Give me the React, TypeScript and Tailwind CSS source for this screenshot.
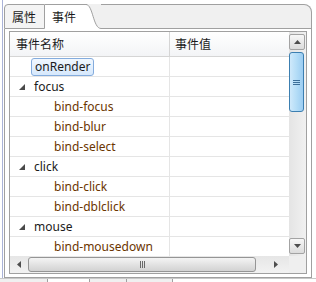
const rows: { kind: "sel" | "group" | "child"; label: string }[] = [
  { kind: "sel", label: "onRender" },
  { kind: "group", label: "focus" },
  { kind: "child", label: "bind-focus" },
  { kind: "child", label: "bind-blur" },
  { kind: "child", label: "bind-select" },
  { kind: "group", label: "click" },
  { kind: "child", label: "bind-click" },
  { kind: "child", label: "bind-dblclick" },
  { kind: "group", label: "mouse" },
  { kind: "child", label: "bind-mousedown" },
];

function Expander() {
  return (
    <svg width="6" height="6" viewBox="0 0 6 6" className="shrink-0">
      <polygon points="6,0 6,6 0,6" fill="#4a4a4a" />
    </svg>
  );
}

function Arrow({ dir }: { dir: "up" | "down" | "left" | "right" }) {
  const pts = {
    up: "0,4 7,4 3.5,0",
    down: "0,0 7,0 3.5,4",
    left: "4,0 4,7 0,3.5",
    right: "0,0 0,7 4,3.5",
  }[dir];
  const vertical = dir === "up" || dir === "down";
  return (
    <svg width={vertical ? 7 : 4} height={vertical ? 4 : 7} viewBox={vertical ? "0 0 7 4" : "0 0 4 7"}>
      <polygon points={pts} fill="#4d4d4d" />
    </svg>
  );
}

export default function App() {
  return (
    <div className="flex h-[282px] w-[316px] flex-col overflow-hidden bg-white font-['Noto_Sans','Noto_Sans_CJK_SC',sans-serif] text-[12px] text-[#1b1b1b]">
      <div className="flex h-[278px]">
        {/* left edge line */}
        <div className="w-[2px]" />
        <div className="w-px bg-[#aab3d8]" />
        <div className="w-px" />

        <div className="flex w-[308px] flex-col pt-[4px]">
          {/* tab strip */}
          <div className="flex h-[25px]">
            <div className="flex w-[41px] items-center rounded-tl-[4px] border-y border-l border-r border-[#a0a0a0] bg-[#f4f4f4] pl-[7px] font-['Noto_Sans_CJK_SC',sans-serif]">
              属性
            </div>
            <div className="flex w-[41px] items-center border-t border-[#a0a0a0] bg-white pl-[7px] font-['Noto_Sans_CJK_SC',sans-serif]">
              事件
            </div>
            <svg width="15" height="25" viewBox="0 0 15 25" className="shrink-0">
              <rect x="0" y="0" width="15" height="25" fill="#f0f0f0" />
              <path d="M0 0.5 C7 0.5 7 24.5 15 24.5 L15 25 L0 25 Z" fill="#ffffff" />
              <path d="M0 0.5 C7 0.5 7 24.5 15 24.5" fill="none" stroke="#a0a0a0" />
              <line x1="0" y1="0.5" x2="1" y2="0.5" stroke="#a0a0a0" />
            </svg>
            <div className="flex-1 rounded-tr-[8px] border-y border-r border-[#a0a0a0] bg-[#f0f0f0]" />
          </div>

          {/* panel body */}
          <div className="flex flex-1 flex-col border-x border-b border-[#a0a0a0] bg-white px-[4px] pb-[3px] pt-[2px]">
            <div className="flex flex-1 flex-col border border-[#a0a0a0]">
              <div className="flex h-[224px]">
                {/* list content */}
                <div className="flex w-[279px] flex-col overflow-hidden">
                  <div className="flex h-[25px] shrink-0 border-b border-[#d5d5d5] bg-gradient-to-b from-white to-[#f3f4f6] font-['Noto_Sans_CJK_SC',sans-serif]">
                    <div className="flex w-[160px] items-center border-r border-[#d5d5d5] pl-[6px]">事件名称</div>
                    <div className="flex flex-1 items-center pl-[5px]">事件值</div>
                  </div>
                  {rows.map((r) => (
                    <div key={r.label} className="flex h-[20px] shrink-0 border-b border-[#e5e5e5]">
                      <div className="flex w-[160px] items-center border-r border-[#e5e5e5]">
                        {r.kind === "sel" && (
                          <div className="ml-[21px] flex h-[18px] items-center rounded-[3px] border border-[#84acdd] bg-gradient-to-b from-[#f1f7fe] to-[#d6e8fc] px-[3px]">
                            {r.label}
                          </div>
                        )}
                        {r.kind === "group" && (
                          <div className="flex items-center pl-[9px]">
                            <Expander />
                            <span className="ml-[9px]">{r.label}</span>
                          </div>
                        )}
                        {r.kind === "child" && (
                          <span className="pl-[44px] text-[#6b3500]">{r.label}</span>
                        )}
                      </div>
                      <div className="flex-1" />
                    </div>
                  ))}
                </div>

                {/* vertical scrollbar */}
                <div className="flex w-[17px] flex-col bg-gradient-to-r from-[#e4e4e4] to-[#f1f1f1]">
                  <div className="mt-[2px] flex h-[16px] w-[16px] items-center justify-center rounded-[2px] border border-[#a3a3a3] bg-gradient-to-b from-[#f7f7f7] to-[#dcdcdc]">
                    <Arrow dir="up" />
                  </div>
                  <div className="mt-[2px] flex h-[60px] w-[15px] flex-col items-center justify-center gap-[1px] rounded-[3px] border border-[#3c7fb1] bg-gradient-to-r from-[#cfe9fb] via-[#b4ddf7] to-[#9ccdf2]">
                    <div className="h-px w-[7px] bg-[#3d6f99]" />
                    <div className="h-px w-[7px] bg-[#3d6f99]" />
                    <div className="h-px w-[7px] bg-[#3d6f99]" />
                  </div>
                  <div className="flex-1" />
                  <div className="mb-[2px] flex h-[16px] w-[16px] items-center justify-center rounded-[2px] border border-[#a3a3a3] bg-gradient-to-b from-[#f7f7f7] to-[#dcdcdc]">
                    <Arrow dir="down" />
                  </div>
                </div>
              </div>

              {/* horizontal scrollbar */}
              <div className="flex h-[17px]">
                <div className="flex w-[279px] items-center bg-gradient-to-b from-[#e6e6e6] to-[#f2f2f2]">
                  <div className="flex w-[17px] justify-center">
                    <Arrow dir="left" />
                  </div>
                  <div className="ml-[1px] flex h-[15px] w-[228px] items-center justify-center gap-[1px] rounded-[3px] border border-[#959595] bg-gradient-to-b from-[#f4f4f4] to-[#d2d2d2]">
                    <div className="h-[7px] w-px bg-[#6a6a6a]" />
                    <div className="h-[7px] w-px bg-[#6a6a6a]" />
                    <div className="h-[7px] w-px bg-[#6a6a6a]" />
                  </div>
                  <div className="flex flex-1 justify-center pl-[6px]">
                    <Arrow dir="right" />
                  </div>
                </div>
                <div className="flex-1 bg-[#efefef]" />
              </div>
            </div>
          </div>
        </div>
      </div>

      {/* bottom strip */}
      <div className="flex h-[4px] border-t border-[#c8c8c8]">
        <div className="w-[48px] border-r border-[#a0a0a0] bg-[#f0f0f0]" />
        <div className="w-[42px] border-r border-[#a0a0a0] bg-white" />
        <div className="w-[37px] border-r border-[#a0a0a0] bg-[#f0f0f0]" />
        <div className="w-[46px] border-r border-[#a0a0a0] bg-[#f0f0f0]" />
        <div className="flex-1 bg-white" />
      </div>
    </div>
  );
}
